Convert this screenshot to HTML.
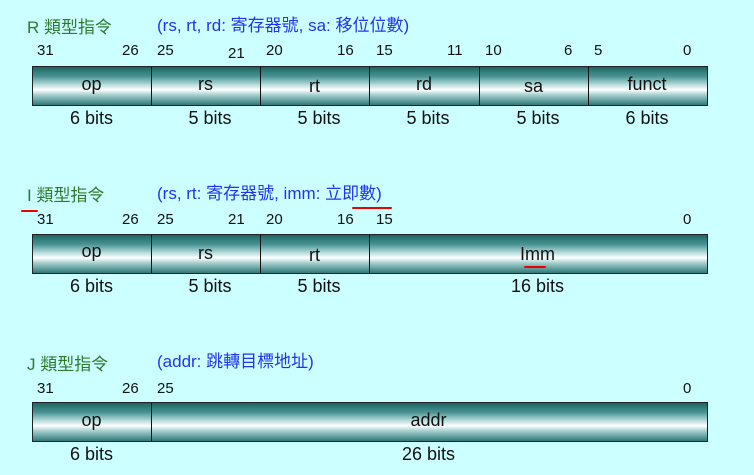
<!DOCTYPE html><html><head><meta charset="utf-8"><style>
body{margin:0;width:754px;height:475px;background:#ccffff;position:relative;overflow:hidden;font-family:"Liberation Sans","Noto Sans CJK TC",sans-serif;}
.a{position:absolute;white-space:nowrap;line-height:1}
.t{color:#2d7a2d;font-size:17px}
.b{color:#2233ee;font-size:17px}
.n{font-size:15px;color:#111}
.bar{position:absolute;left:32px;width:674px;height:38px;border:1px solid #222;background:linear-gradient(to bottom,#1d6565 0%,#4a9494 25%,#bfe0e0 48%,#ffffff 60%,#9ccaca 75%,#2f7878 100%);}
.d{position:absolute;top:0;bottom:0;width:1px;background:#111}
.c{position:absolute;text-align:center;font-size:18px;color:#111;line-height:1}
.r{position:absolute;background:#e00;height:2px;border-radius:1px}
</style></head><body>
<!-- R -->
<div class="a t" style="left:27px;top:19px">R 類型指令</div>
<div class="a b" style="left:157px;top:17px">(rs, rt, rd: 寄存器號, sa: 移位位數)</div>
<div class="a n" style="left:37px;top:43px">31</div><div class="a n" style="left:122px;top:43px">26</div>
<div class="a n" style="left:157px;top:43px">25</div><div class="a n" style="left:228px;top:46px">21</div>
<div class="a n" style="left:266px;top:43px">20</div><div class="a n" style="left:337px;top:43px">16</div>
<div class="a n" style="left:376px;top:43px">15</div><div class="a n" style="left:447px;top:43px">11</div>
<div class="a n" style="left:485px;top:43px">10</div><div class="a n" style="left:564px;top:43px">6</div>
<div class="a n" style="left:594px;top:43px">5</div><div class="a n" style="left:683px;top:43px">0</div>
<div class="bar" style="top:66px"><div class="d" style="left:118px"></div><div class="d" style="left:227px"></div><div class="d" style="left:336px"></div><div class="d" style="left:446px"></div><div class="d" style="left:555px"></div></div>
<div class="c" style="left:32px;width:119px;top:75px">op</div>
<div class="c" style="left:151px;width:109px;top:75px">rs</div>
<div class="c" style="left:260px;width:109px;top:77px">rt</div>
<div class="c" style="left:369px;width:110px;top:75px">rd</div>
<div class="c" style="left:479px;width:109px;top:77px">sa</div>
<div class="c" style="left:588px;width:118px;top:75px">funct</div>
<div class="c" style="left:32px;width:119px;top:109px">6 bits</div>
<div class="c" style="left:151px;width:118px;top:109px">5 bits</div>
<div class="c" style="left:260px;width:118px;top:109px">5 bits</div>
<div class="c" style="left:369px;width:118px;top:109px">5 bits</div>
<div class="c" style="left:479px;width:118px;top:109px">5 bits</div>
<div class="c" style="left:588px;width:118px;top:109px">6 bits</div>
<!-- I -->
<div class="a t" style="left:27px;top:187px">I 類型指令</div>
<div class="a b" style="left:157px;top:185px">(rs, rt: 寄存器號, imm: 立即數)</div>
<div class="r" style="left:21px;top:210px;width:17px"></div>
<div class="r" style="left:352px;top:207px;width:40px"></div>
<div class="a n" style="left:37px;top:212px">31</div><div class="a n" style="left:122px;top:212px">26</div>
<div class="a n" style="left:157px;top:212px">25</div><div class="a n" style="left:228px;top:212px">21</div>
<div class="a n" style="left:266px;top:212px">20</div><div class="a n" style="left:337px;top:212px">16</div>
<div class="a n" style="left:376px;top:212px">15</div><div class="a n" style="left:683px;top:212px">0</div>
<div class="bar" style="top:234px"><div class="d" style="left:118px"></div><div class="d" style="left:227px"></div><div class="d" style="left:336px"></div></div>
<div class="c" style="left:32px;width:119px;top:242px">op</div>
<div class="c" style="left:151px;width:109px;top:244px">rs</div>
<div class="c" style="left:260px;width:109px;top:246px">rt</div>
<div class="c" style="left:369px;width:337px;top:245px">Imm</div>
<div class="r" style="left:524px;top:266px;width:22px"></div>
<div class="c" style="left:32px;width:119px;top:277px">6 bits</div>
<div class="c" style="left:151px;width:118px;top:277px">5 bits</div>
<div class="c" style="left:260px;width:118px;top:277px">5 bits</div>
<div class="c" style="left:369px;width:337px;top:277px">16 bits</div>
<!-- J -->
<div class="a t" style="left:27px;top:356px">J 類型指令</div>
<div class="a b" style="left:157px;top:353px">(addr: 跳轉目標地址)</div>
<div class="a n" style="left:37px;top:381px">31</div><div class="a n" style="left:122px;top:381px">26</div>
<div class="a n" style="left:157px;top:381px">25</div><div class="a n" style="left:683px;top:381px">0</div>
<div class="bar" style="top:402px"><div class="d" style="left:118px"></div></div>
<div class="c" style="left:32px;width:119px;top:411px">op</div>
<div class="c" style="left:151px;width:555px;top:411px">addr</div>
<div class="c" style="left:32px;width:119px;top:445px">6 bits</div>
<div class="c" style="left:151px;width:555px;top:445px">26 bits</div>
</body></html>
